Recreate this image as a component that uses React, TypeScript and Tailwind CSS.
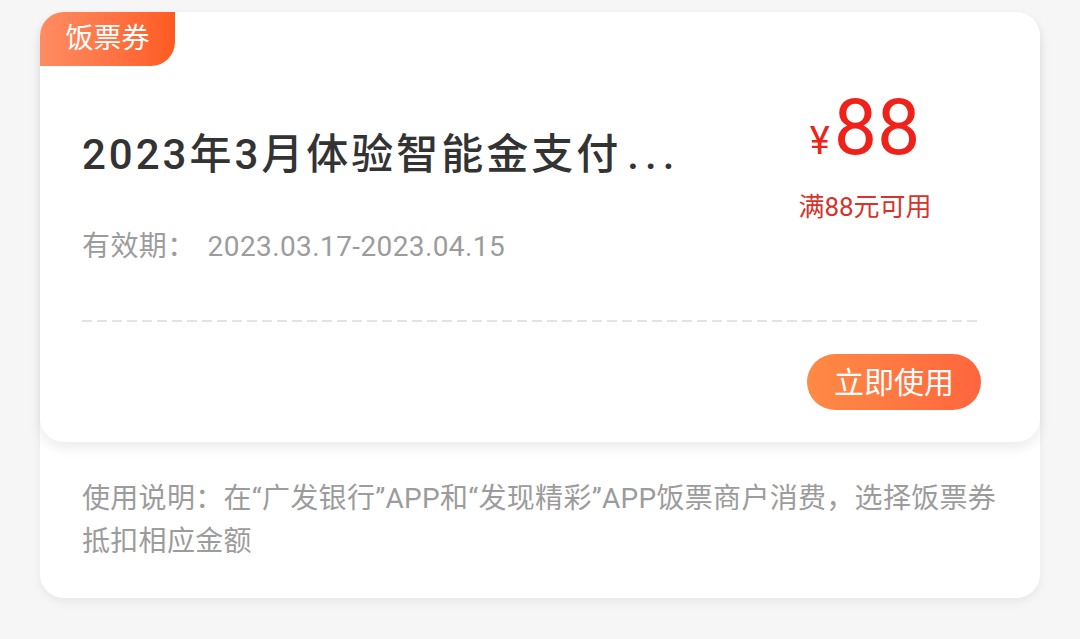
const font = { fontFamily: 'Roboto, "Noto Sans CJK SC", sans-serif' };

export default function App() {
  return (
    <div className="min-h-[639px] bg-[#f6f6f6] px-10 pt-3" style={font}>
      <div className="rounded-[24px] bg-white shadow-[0_4px_10px_rgba(0,0,0,0.06)]">
        {/* coupon */}
        <div className="relative rounded-[24px] bg-white pl-[42px] pr-[59px] pt-[72px] pb-[32px] shadow-[0_6px_12px_rgba(0,0,0,0.08)]">
          <div className="absolute left-0 top-0 flex h-[54px] w-[135px] items-center justify-center rounded-tl-[24px] rounded-br-[24px] bg-gradient-to-r from-[#ff8c62] to-[#ff5a1f] text-[28px] text-white">
            饭票券
          </div>

          <div className="flex items-start justify-between">
            <div className="flex flex-col">
              <div className="mt-[44px] text-[42px] font-medium leading-[54px] tracking-[3px] text-[#333333]">
                2023年3月体验智能金支付<span className="ml-[6px] tracking-[6px]">...</span>
              </div>
              <div className="mt-[46px] text-[28px] leading-[38px] tracking-[0.4px] text-[#9c9c9c]">
                有效期：<span className="ml-[12px]">2023.03.17-2023.04.15</span>
              </div>
            </div>
            <div className="mr-[36px] mt-[6px] flex w-[160px] flex-col items-center text-[#ef2219]">
              <div className="flex items-baseline leading-none">
                <span className="mr-[4px] text-[38px]">¥</span>
                <span className="text-[77px]">88</span>
              </div>
              <div className="mt-[24px] text-[26px] leading-[32px] text-[#d8322a]">满88元可用</div>
            </div>
          </div>

          <div className="mt-[54px] h-[2px] bg-[repeating-linear-gradient(90deg,#e3e3e3_0_10px,transparent_10px_15px)]" />

          <div className="mt-[32px] flex justify-end">
            <button className="flex h-[56px] w-[174px] items-center justify-center rounded-full bg-gradient-to-r from-[#ff8a45] to-[#ff653e] text-[30px] text-white">
              立即使用
            </button>
          </div>
        </div>

        {/* instructions */}
        <div className="whitespace-nowrap pl-[42px] pr-[20px] pt-[35px] pb-[35px] text-[28px] leading-[43px] tracking-[0.3px] text-[#9c9c9c]">
          使用说明：在“广发银行”APP和“发现精彩”APP饭票商户消费，选择饭票券
          <br />
          抵扣相应金额
        </div>
      </div>
    </div>
  );
}
